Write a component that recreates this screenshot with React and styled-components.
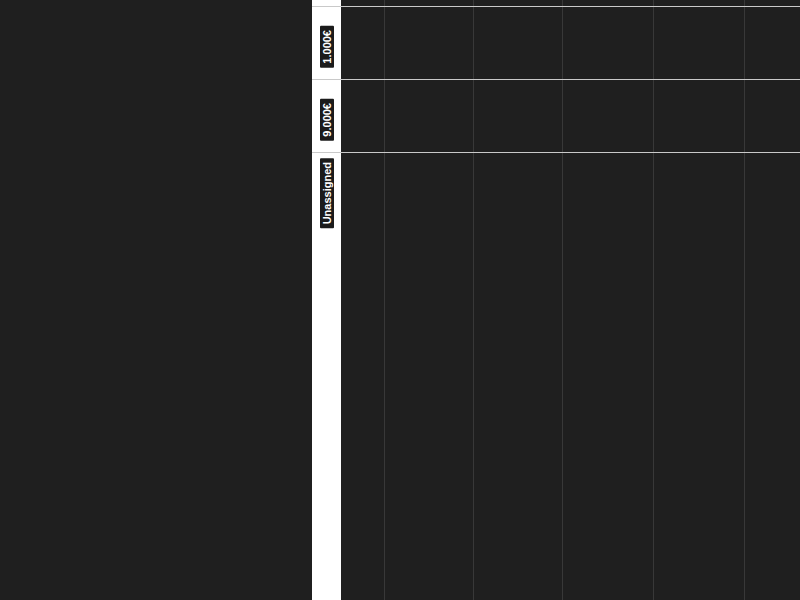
import React from "react";
import styled, { createGlobalStyle } from "styled-components";

const Global = createGlobalStyle`
  html, body { margin: 0; padding: 0; background: #1f1f1f; height: 100%; overflow: hidden; }
  #root { height: 100%; }
  * { box-sizing: border-box; }
`;

const Page = styled.div`
  display: flex;
  height: 600px;
  width: 800px;
  background: #1f1f1f;
  font-family: "Liberation Sans", Arial, sans-serif;
`;

const SidePanel = styled.div`
  width: 312px;
  flex: none;
  background: #1f1f1f;
`;

const Board = styled.div`
  flex: 1;
  display: flex;
  flex-direction: column;
  overflow: hidden;
`;

const Row = styled.div`
  display: flex;
  flex: ${(p) => (p.$grow ? "1" : "none")};
  height: ${(p) => (p.$grow ? "auto" : `${p.$h}px`)};
  border-top: ${(p) => (p.$first ? "none" : "1px solid #c9c9c9")};
`;

const LabelCell = styled.div`
  width: 29px;
  flex: none;
  background: #ffffff;
  display: flex;
  justify-content: flex-start;
  align-items: flex-start;
  padding-left: 8px;
  padding-top: ${(p) => p.$pt}px;
`;

const Label = styled.div`
  writing-mode: vertical-rl;
  transform: rotate(180deg);
  background: #1b1b1b;
  color: #ffffff;
  font-weight: 700;
  font-size: 11px;
  line-height: 14px;
  width: 14px;
  padding: 4px 0;
  white-space: nowrap;
  border-radius: 1px;
`;

const Cells = styled.div`
  flex: 1;
  display: flex;
  background: #1f1f1f;
`;

const Cell = styled.div`
  flex: ${(p) => (p.$w ? `0 0 ${p.$w}px` : "1")};
  border-left: ${(p) => (p.$edge ? "none" : "1px solid #383838")};
`;

const widths = [43, 89, 89, 91, 91, null];

const rows = [
  { key: "top", h: 6, label: null, first: true },
  { key: "1000", h: 73, label: "1.000€", pt: 19 },
  { key: "9000", h: 73, label: "9.000€", pt: 19 },
  { key: "un", grow: true, label: "Unassigned", pt: 5 },
];

export default function App() {
  return (
    <>
      <Global />
      <Page>
        <SidePanel />
        <Board>
          {rows.map((r) => (
            <Row key={r.key} $h={r.h} $grow={r.grow} $first={r.first}>
              <LabelCell $pt={r.pt || 0}>
                {r.label && <Label>{r.label}</Label>}
              </LabelCell>
              <Cells>
                {widths.map((w, i) => (
                  <Cell key={i} $w={w} $edge={i === 0} />
                ))}
              </Cells>
            </Row>
          ))}
        </Board>
      </Page>
    </>
  );
}
